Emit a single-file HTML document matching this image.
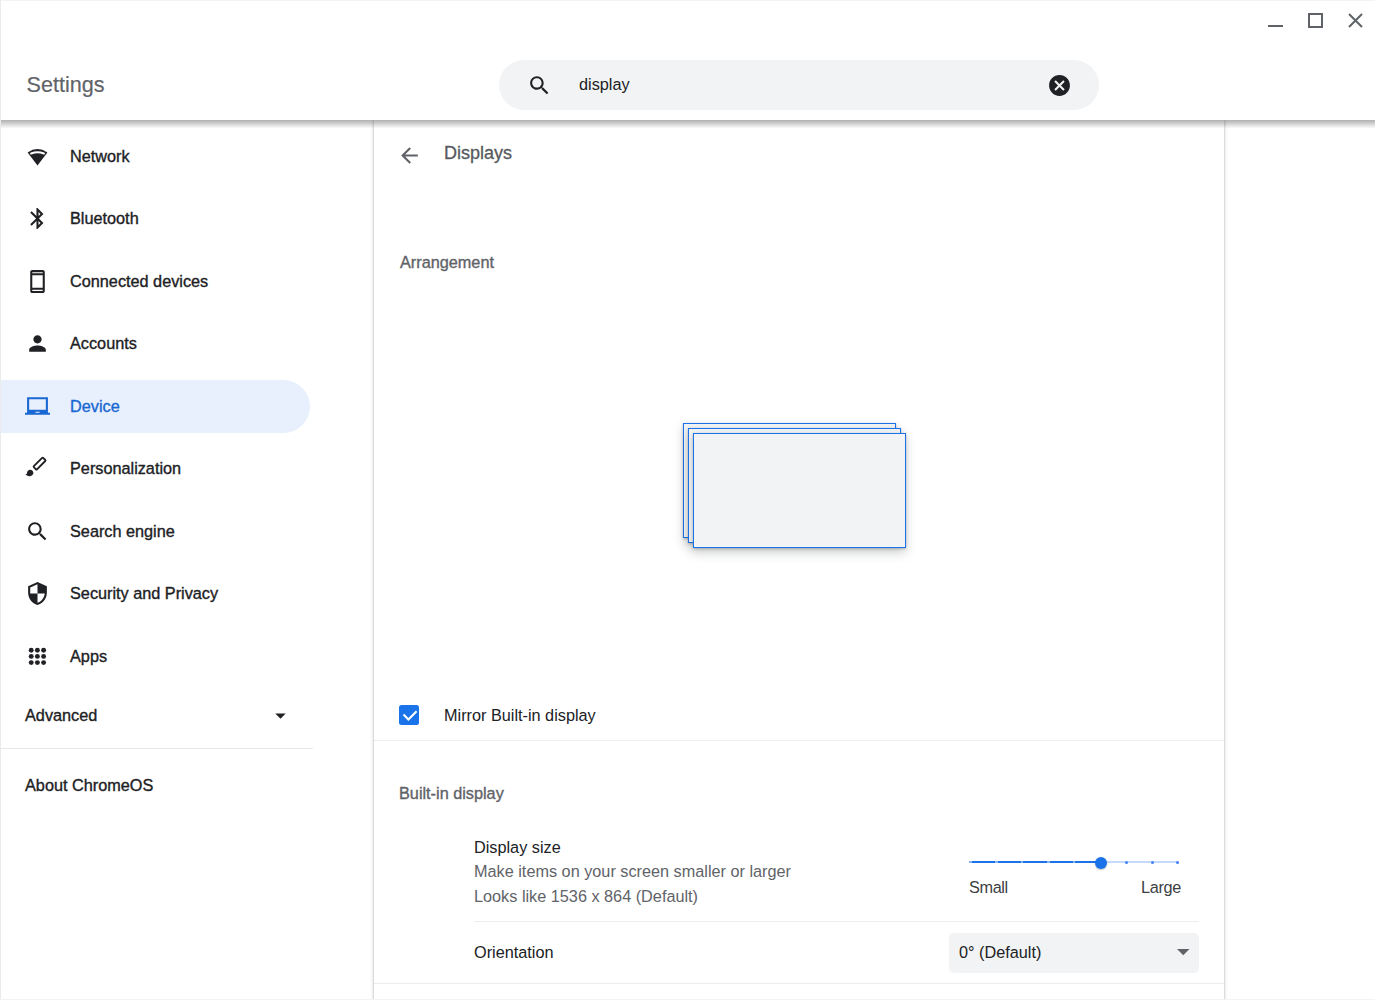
<!DOCTYPE html>
<html><head><meta charset="utf-8">
<style>
html,body{margin:0;padding:0;}
body{width:1375px;height:1000px;position:relative;overflow:hidden;background:#fff;font-family:"Liberation Sans",sans-serif;color:#202124;}
.a{position:absolute;}
.t{position:absolute;white-space:nowrap;font-size:16.25px;line-height:20px;}
.med{-webkit-text-stroke:0.35px currentColor;}
.ic{position:absolute;width:25px;height:25px;}
.sec{color:#5f6368;}
</style></head><body>
<!-- header -->
<div class="t sec" style="left:26.5px;top:73px;font-size:21.6px;line-height:24px;-webkit-text-stroke:0.2px #5f6368">Settings</div>
<div class="a" style="left:499px;top:60px;width:600px;height:50px;border-radius:25px;background:#f1f3f4"></div>
<svg class="ic" style="left:526.5px;top:72.5px" viewBox="0 0 24 24"><path fill="#202124" d="M15.5 14h-.79l-.28-.27C15.41 12.59 16 11.11 16 9.5 16 5.91 13.09 3 9.5 3S3 5.91 3 9.5 5.91 16 9.5 16c1.61 0 3.09-.59 4.23-1.57l.27.28v.79l5 4.99L20.49 19l-4.99-5zm-6 0C7.01 14 5 11.99 5 9.5S7.01 5 9.5 5 14 7.01 14 9.5 11.99 14 9.5 14z"/></svg>
<div class="t" style="left:579px;top:74px;">display</div>
<svg class="ic" style="left:1047px;top:72.7px" viewBox="0 0 24 24"><path fill="#202124" d="M12 2C6.47 2 2 6.47 2 12s4.47 10 10 10 10-4.47 10-10S17.53 2 12 2zm5 13.59L15.59 17 12 13.41 8.41 17 7 15.59 10.59 12 7 8.41 8.41 7 12 10.59 15.59 7 17 8.41 13.41 12 17 15.59z"/></svg>

<!-- window controls -->
<div class="a" style="left:1268px;top:25.4px;width:15px;height:2px;background:#5f6368"></div>
<div class="a" style="left:1307.8px;top:12.7px;width:11px;height:11px;border:2px solid #5f6368"></div>
<svg class="a" style="left:1347px;top:12px;width:17px;height:17px" viewBox="0 0 17 17"><path d="M2 2L15 15M15 2L2 15" stroke="#5f6368" stroke-width="2"/></svg>

<!-- sidebar -->
<!-- selected highlight -->
<div class="a" style="left:1px;top:380px;width:309px;height:53px;border-radius:0 26.5px 26.5px 0;background:#e8f0fe"></div>
<svg class="ic" style="left:25px;top:143px" viewBox="0 0 24 24" fill="#202124"><path d="M2.5 9.2Q12 2.52 21.5 9.2L12 21.5Z"/><path d="M5.9 10.1Q12 7.8 18.1 10.1" fill="none" stroke="#fff" stroke-width="2" stroke-linecap="round"/></svg>
<div class="t med" style="left:70px;top:146.0px;color:#202124">Network</div>
<svg class="ic" style="left:25px;top:206.0px" viewBox="0 0 24 24" fill="#202124"><path d="M17.71 7.71L12 2h-1v7.59L6.41 5 5 6.41 10.59 12 5 17.59 6.41 19 11 14.41V22h1l5.71-5.71-4.3-4.29 4.3-4.29zM13 5.83l1.88 1.88L13 9.59V5.83zm1.88 10.46L13 18.17v-3.76l1.88 1.88z"/></svg>
<div class="t med" style="left:70px;top:208px;color:#202124">Bluetooth</div>
<svg class="ic" style="left:25px;top:268.5px" viewBox="0 0 24 24" fill="#202124"><path d="M17 1.01L7 1c-1.1 0-2 .9-2 2v18c0 1.1.9 2 2 2h10c1.1 0 2-.9 2-2V3c0-1.1-.9-1.99-2-1.99zM17 21H7v-1h10v1zm0-3H7V6h10v12zM7 4V3h10v1H7z"/></svg>
<div class="t med" style="left:70px;top:271.0px;color:#202124">Connected devices</div>
<svg class="ic" style="left:25px;top:331.0px" viewBox="0 0 24 24" fill="#202124"><path d="M12 12c2.21 0 4-1.79 4-4s-1.79-4-4-4-4 1.79-4 4 1.79 4 4 4zm0 2c-2.67 0-8 1.34-8 4v2h16v-2c0-2.66-5.33-4-8-4z"/></svg>
<div class="t med" style="left:70px;top:333px;color:#202124">Accounts</div>
<svg class="ic" style="left:25px;top:393.5px" viewBox="0 0 24 24" fill="#1967d2"><path d="M22 18V3H2v15H0v2h24v-2h-2zm-8 0h-4v-1h4v1zm6-3H4V5h16v10z"/></svg>
<div class="t med" style="left:70px;top:396.0px;color:#1967d2">Device</div>
<svg class="ic" style="left:25px;top:456.0px" viewBox="0 0 25 25"><rect x="-6.6" y="-2.2" width="13.2" height="4.4" rx="0.7" transform="translate(14.55 7.6) rotate(-45)" fill="none" stroke="#202124" stroke-width="1.85"/><path fill="#202124" d="M5.2 13.8c-1.77 0-3.2 1.43-3.2 3.2 0 1.2-.9 1.3-1.6 1.3.9 1.1 2.3 1.9 3.8 1.9 2.1 0 4.2-1.3 4.2-3.2 0-1.77-1.43-3.2-3.2-3.2z"/></svg>
<div class="t med" style="left:70px;top:458px;color:#202124">Personalization</div>
<svg class="ic" style="left:25px;top:518.5px" viewBox="0 0 24 24" fill="#202124"><path d="M15.5 14h-.79l-.28-.27C15.41 12.59 16 11.11 16 9.5 16 5.910 13.09 3 9.5 3S3 5.91 3 9.5 5.91 16 9.5 16c1.61 0 3.09-.59 4.23-1.57l.27.28v.79l5 4.99L20.49 19l-4.99-5zm-6 0C7.01 14 5 11.99 5 9.5S7.01 5 9.5 5 14 7.01 14 9.5 11.99 14 9.5 14z"/></svg>
<div class="t med" style="left:70px;top:521.0px;color:#202124">Search engine</div>
<svg class="ic" style="left:25px;top:581.0px" viewBox="0 0 24 24" fill="#202124"><path d="M12 1L3 5v6c0 5.55 3.84 10.74 9 12 5.160-1.26 9-6.45 9-12V5l-9-4zm0 10.99h7c-.53 4.12-3.28 7.79-7 8.94V12H5V6.3l7-3.11v8.8z"/></svg>
<div class="t med" style="left:70px;top:583px;color:#202124">Security and Privacy</div>
<svg class="a" style="left:0;top:0;width:60px;height:680px" viewBox="0 0 60 680" fill="#202124"><circle cx="31.2" cy="650.2" r="2.45"/><circle cx="37.4" cy="650.2" r="2.45"/><circle cx="43.6" cy="650.2" r="2.45"/><circle cx="31.2" cy="656.4" r="2.45"/><circle cx="37.4" cy="656.4" r="2.45"/><circle cx="43.6" cy="656.4" r="2.45"/><circle cx="31.2" cy="662.6" r="2.45"/><circle cx="37.4" cy="662.6" r="2.45"/><circle cx="43.6" cy="662.6" r="2.45"/></svg>
<div class="t med" style="left:70px;top:646.0px;color:#202124">Apps</div>
<div class="t med" style="left:25px;top:705px;">Advanced</div>
<svg class="ic" style="left:267.7px;top:702.5px" viewBox="0 0 24 24" fill="#202124"><path d="M7 10l5 5 5-5z"/></svg>
<div class="a" style="left:1px;top:748px;width:312px;height:1px;background:#e8e8e8"></div>
<div class="t med" style="left:25px;top:775px;">About ChromeOS</div>

<!-- content card -->
<div class="a" style="left:374px;top:120px;width:850px;height:900px;background:#fff;box-shadow:0 1px 2px 0 rgba(60,64,67,.3),0 1px 3px 1px rgba(60,64,67,.15);clip-path:inset(0 -10px -10px -10px)"></div>


<!-- content -->
<svg class="ic" style="left:397px;top:143px" viewBox="0 0 24 24" fill="#5f6368"><path d="M20 11H7.83l5.59-5.59L12 4l-8 8 8 8 1.41-1.41L7.83 13H20v-2z"/></svg>
<div class="t" style="left:444px;top:143px;font-size:18px;color:#55595e;-webkit-text-stroke:0.3px #55595e">Displays</div>
<div class="t med sec" style="left:400px;top:252px;">Arrangement</div>

<div class="a" style="left:683px;top:423px;width:211px;height:113px;border:1px solid #1a73e8;background:#f1f3f4;box-shadow:0 1.25px 2.5px rgba(60,64,67,.3),0 5px 10px 1px rgba(60,64,67,.15)"></div>
<div class="a" style="left:688px;top:428px;width:211px;height:113px;border:1px solid #1a73e8;background:#f1f3f4;box-shadow:0 1.25px 2.5px rgba(60,64,67,.3),0 5px 10px 1px rgba(60,64,67,.15)"></div>
<div class="a" style="left:693px;top:433px;width:211px;height:113px;border:1px solid #1a73e8;background:#f1f3f4;box-shadow:0 1.25px 2.5px rgba(60,64,67,.3),0 5px 10px 1px rgba(60,64,67,.15)"></div>

<div class="a" style="left:399px;top:705px;width:20px;height:20px;border-radius:2.5px;background:#1a73e8"></div>
<svg class="a" style="left:399px;top:705px;width:20px;height:20px" viewBox="0 0 20 20"><path d="M4.5 9.6L9.4 14.4 17.6 6.2" fill="none" stroke="#fff" stroke-width="2.1"/></svg>
<div class="t" style="left:444px;top:705px;">Mirror Built-in display</div>
<div class="a" style="left:374px;top:740px;width:850px;height:1px;background:#ededed"></div>

<div class="t med sec" style="left:399px;top:783px;">Built-in display</div>
<div class="t" style="left:474px;top:837px;">Display size</div>
<div class="t sec" style="left:474px;top:861px;">Make items on your screen smaller or larger</div>
<div class="t sec" style="left:474px;top:886px;">Looks like 1536 x 864 (Default)</div>

<!-- slider -->
<div class="a" style="left:969px;top:861px;width:132px;height:2px;background:#1a73e8"></div>
<div class="a" style="left:1101px;top:861px;width:78px;height:2px;background:#c6dafc"></div>
<div class="a" style="left:969.3px;top:861px;width:2.4px;height:2px;background:#8ab4f8"></div>
<div class="a" style="left:995.2px;top:861px;width:2.4px;height:2px;background:#8ab4f8"></div>
<div class="a" style="left:1021.0px;top:861px;width:2.4px;height:2px;background:#8ab4f8"></div>
<div class="a" style="left:1047.2px;top:861px;width:2.4px;height:2px;background:#8ab4f8"></div>
<div class="a" style="left:1073.1px;top:861px;width:2.4px;height:2px;background:#8ab4f8"></div>
<div class="a" style="left:1124.9px;top:860.5px;width:3px;height:3px;border-radius:50%;background:#4285f4"></div>
<div class="a" style="left:1150.9px;top:860.5px;width:3px;height:3px;border-radius:50%;background:#4285f4"></div>
<div class="a" style="left:1176.3px;top:860.5px;width:3px;height:3px;border-radius:50%;background:#4285f4"></div>
<div class="a" style="left:1094.6px;top:856.6px;width:12px;height:12px;border-radius:50%;background:#1a73e8;box-shadow:0 1px 2px rgba(60,64,67,.3)"></div>
<div class="t" style="left:969px;top:877px;color:#3c4043;letter-spacing:-0.35px">Small</div>
<div class="t" style="left:1141px;top:877px;color:#3c4043;letter-spacing:-0.3px">Large</div>

<div class="a" style="left:474px;top:921px;width:725px;height:1px;background:#ededed"></div>
<div class="t" style="left:474px;top:942px;">Orientation</div>
<div class="a" style="left:949px;top:933px;width:250px;height:40px;border-radius:5px;background:#f1f3f4"></div>
<div class="t" style="left:959px;top:942px;">0° (Default)</div>
<svg class="a" style="left:1176px;top:948px;width:14px;height:8px" viewBox="0 0 14 8"><path d="M1 1h12.5L7.25 7.2z" fill="#5f6368"/></svg>
<div class="a" style="left:374px;top:983px;width:850px;height:1px;background:#ededed"></div>

<!-- header shadow -->
<div class="a" style="left:0;top:120px;width:1375px;height:8px;background:linear-gradient(rgba(0,0,0,.31),rgba(0,0,0,.02))"></div>

<!-- window border -->
<div class="a" style="left:0;top:0;width:1375px;height:1px;background:#f3f3f3"></div>
<div class="a" style="left:0;top:0;width:1px;height:1000px;background:#ebebeb"></div>
<div class="a" style="left:0;top:999px;width:1375px;height:1px;background:#f3f3f3"></div>

</body></html>
